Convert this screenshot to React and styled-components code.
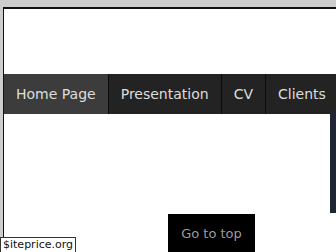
import React from 'react'
import styled, { createGlobalStyle } from 'styled-components'

const Global = createGlobalStyle`
  html, body {
    margin: 0;
    padding: 0;
    background: #cdcdcd;
    overflow: hidden;
  }
  #root {
    width: 336px;
    height: 252px;
  }
`

const Frame = styled.div`
  display: flex;
  width: 336px;
  height: 252px;
  padding: 7px 0 0 3px;
  box-sizing: border-box;
`

const Main = styled.div`
  flex: 1;
  display: flex;
  flex-direction: column;
  background: #fff;
  border-top: 2px solid #111;
  border-left: 1px solid #111;
  padding-top: 65px;
`

const Gutter = styled.div`
  width: 2px;
  background: #fff;
  border-left: 1px solid #e2e2e2;
`

const Nav = styled.nav`
  display: flex;
  height: 40px;
  background: #232323;
`

const Tab = styled.a`
  display: flex;
  align-items: center;
  padding: 0 12px;
  font-family: "DejaVu Sans", Verdana, sans-serif;
  font-size: 14px;
  color: #dedede;
  text-decoration: none;
  white-space: nowrap;
  background: ${p => (p.$active ? '#3c3c3c' : '#232323')};
  border-right: 1px solid #0c0c0c;
`

const Body = styled.div`
  display: flex;
  justify-content: flex-end;
`

const SideBar = styled.div`
  width: 9px;
  height: 99px;
  background: #1f2533;
`

const TopButton = styled.button`
  position: fixed;
  left: 168px;
  top: 214px;
  width: 87px;
  height: 40px;
  border: none;
  background: #000;
  color: #9c9c9c;
  font-family: "DejaVu Sans", Verdana, sans-serif;
  font-size: 13px;
  padding: 0 0 2px;
`

const Badge = styled.div`
  position: fixed;
  left: 0;
  top: 237px;
  padding: 0 2px;
  background: #fff;
  border: 1px solid #333;
  font-family: "DejaVu Sans", Verdana, sans-serif;
  font-size: 11px;
  line-height: 14px;
  color: #111;
`

export default function App() {
  return (
    <>
      <Global />
      <Frame>
        <Main>
          <Nav>
            <Tab $active>Home Page</Tab>
            <Tab>Presentation</Tab>
            <Tab>CV</Tab>
            <Tab>Clients</Tab>
          </Nav>
          <Body>
            <SideBar />
          </Body>
        </Main>
        <Gutter />
      </Frame>
      <TopButton>Go to top</TopButton>
      <Badge>$iteprice.org</Badge>
    </>
  )
}
